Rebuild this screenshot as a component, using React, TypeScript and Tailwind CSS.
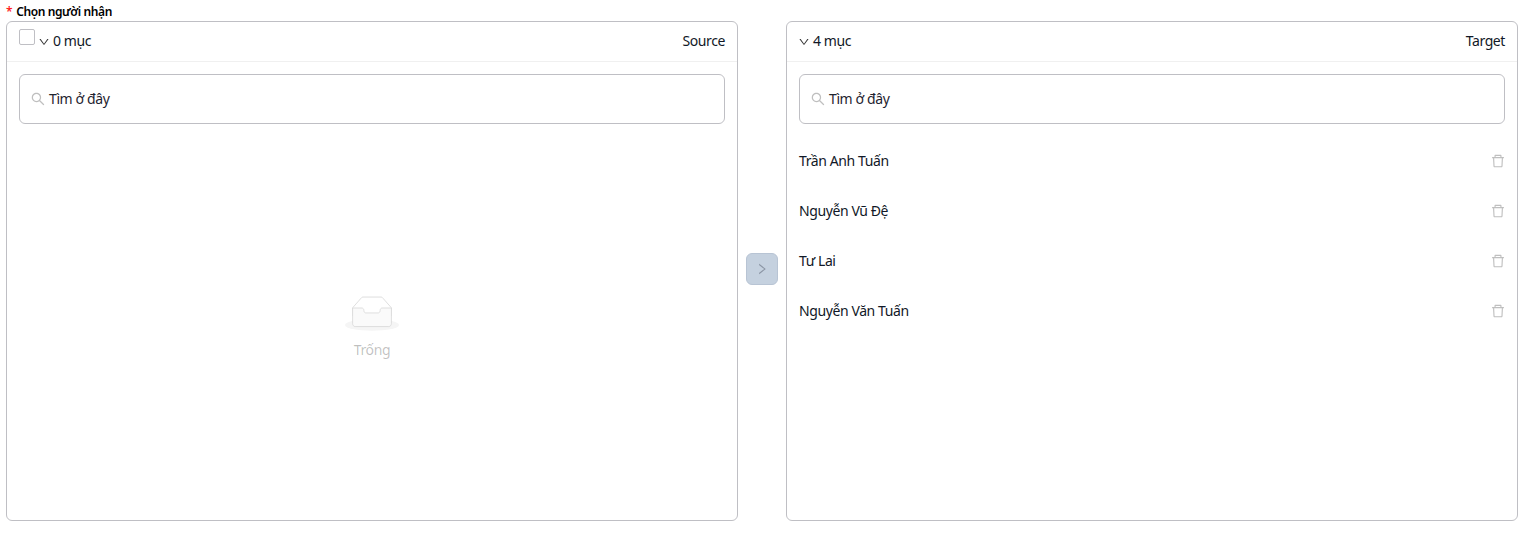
import React from 'react';
import { AiOutlineDelete, AiOutlineDown, AiOutlineRight, AiOutlineSearch } from 'react-icons/ai';

const names = ['Trần Anh Tuấn', 'Nguyễn Vũ Đệ', 'Tư Lai', 'Nguyễn Văn Tuấn'];

const SearchBox = () => (
  <div className="flex h-[50px] items-center rounded-md border border-[#bfbfc4] pl-[10px]">
    <AiOutlineSearch className="mr-[3px] text-[16px] text-[#bfbfbf]" />
    <span className="pb-[2px] text-[#1f2430]">Tìm ở đây</span>
  </div>
);

const EmptyIcon = () => (
  <svg width="54" height="35" viewBox="0 0 64 41">
    <g transform="translate(0 1)" fill="none" fillRule="evenodd">
      <ellipse fill="#f5f5f5" cx="32" cy="33" rx="32" ry="7" />
      <g fillRule="nonzero" stroke="#d9d9d9">
        <path d="M55 12.76L44.854 1.258C44.367.474 43.656 0 42.907 0H21.093c-.749 0-1.46.474-1.947 1.257L9 12.761V22h46v-9.24z" />
        <path
          d="M41.613 15.931c0-1.605.994-2.93 2.227-2.931H55v18.137C55 33.26 53.68 35 52.05 35h-40.1C10.32 35 9 33.259 9 31.137V13h11.16c1.233 0 2.227 1.323 2.227 2.928v.022c0 1.605 1.005 2.901 2.237 2.901h14.752c1.232 0 2.237-1.308 2.237-2.913v-.007z"
          fill="#fafafa"
        />
      </g>
    </g>
  </svg>
);

const App = () => {
  return (
    <div className="h-[553px] bg-white pl-[6px] pr-[11px] font-['Noto_Sans',sans-serif] text-[14px] tracking-[-0.4px] text-[#111827]">
      <div className="flex h-[21px] items-center pt-[3px] text-[12px] font-semibold leading-none text-black">
        <span className="mr-1 text-[#ff1f1f]">*</span>
        Chọn người nhận
      </div>
      <div className="flex h-[500px]">
        <div className="flex flex-1 flex-col rounded-md border border-[#bfbfc4]">
          <div className="flex h-10 items-center border-b border-[#f0f0f0] pl-3 pr-3">
            <span className="mb-[10px] h-4 w-4 rounded-[2px] border border-[#bfbfc4]" />
            <AiOutlineDown className="ml-[3px] mr-[3px] text-[12px] text-[#333]" />
            <span className="pb-[2px]">0 mục</span>
            <span className="ml-auto pb-[2px]">Source</span>
          </div>
          <div className="flex flex-1 flex-col px-3 pt-3">
            <SearchBox />
            <div className="flex flex-1 flex-col items-center pt-[172px]">
              <EmptyIcon />
              <span className="mt-[8px] text-[#00000040]">Trống</span>
            </div>
          </div>
        </div>

        <div className="flex w-12 shrink-0 items-center justify-center pb-1">
          <button className="flex h-8 w-8 items-center justify-center rounded-md border border-[#b8c4d4] bg-[#c5d1df]">
            <AiOutlineRight className="text-[14px] text-[#8c96a5]" />
          </button>
        </div>

        <div className="flex flex-1 flex-col rounded-md border border-[#bfbfc4]">
          <div className="flex h-10 items-center border-b border-[#f0f0f0] pl-3 pr-3">
            <AiOutlineDown className="-ml-px mr-[3px] text-[12px] text-[#333]" />
            <span className="pb-[2px]">4 mục</span>
            <span className="ml-auto pb-[2px]">Target</span>
          </div>
          <div className="px-3 pt-3">
            <SearchBox />
            <ul className="mt-3">
              {names.map((name) => (
                <li key={name} className="flex h-[50px] items-center justify-between">
                  <span className="pb-[2px]">{name}</span>
                  <AiOutlineDelete className="-mr-px text-[16px] text-[#bfbfbf]" />
                </li>
              ))}
            </ul>
          </div>
        </div>
      </div>
    </div>
  );
};

export default App;
